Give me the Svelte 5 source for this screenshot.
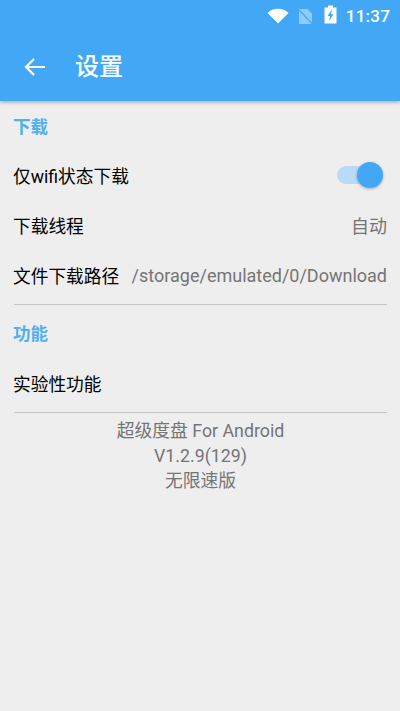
<script>
  const version = 'V1.2.9(129)';
</script>

<div class="screen">
  <header class="appbar">
    <div class="status">
      <svg class="wifi" viewBox="0 0 22 16" width="22" height="16"><path d="M0.5 5 C6.5 -0.6 15.5 -0.6 21.5 5 L11 15.5 Z" fill="#fff"/></svg>
      <svg class="nosim" viewBox="0 0 15 17" width="15" height="17"><path d="M1 1 H9.5 L14 5.5 V16 H1 Z" fill="#fff" fill-opacity=".4"/><path d="M0.5 1.5 L14.5 16" stroke="#42a8f6" stroke-width="1.2"/></svg>
      <svg class="battery" viewBox="0 0 13 19" width="13" height="19"><path d="M4 0.5 H9 V2.5 H12.5 V18.5 H0.5 V2.5 H4 Z" fill="#fff"/><path d="M7.8 4.5 L3.6 11 H6 L5.2 16 L9.4 9.3 H7 Z" fill="#42a8f6"/></svg>
      <span class="time">11:37</span>
    </div>
    <div class="toolbar">
      <svg class="back" viewBox="0 0 24 24" width="24" height="24"><path d="M22 12 H3 M11 4 L3 12 L11 20" fill="none" stroke="#fff" stroke-width="2.2"/></svg>
      <h1>设置</h1>
    </div>
  </header>

  <main class="content">
    <section class="group">
      <h2>下载</h2>
      <div class="row">
        <span class="label">仅wifi状态下载</span>
        <span class="switch"><span class="track"></span><span class="thumb"></span></span>
      </div>
      <div class="row">
        <span class="label">下载线程</span>
        <span class="value">自动</span>
      </div>
      <div class="row">
        <span class="label">文件下载路径</span>
        <span class="value">/storage/emulated/0/Download</span>
      </div>
    </section>
    <section class="group">
      <h2>功能</h2>
      <div class="row">
        <span class="label">实验性功能</span>
      </div>
    </section>
    <footer class="about">
      <p>超级度盘 For Android</p>
      <p>{version}</p>
      <p>无限速版</p>
    </footer>
  </main>
</div>

<style>
  :global(body) {
    margin: 0;
    background: #eeeeee;
  }
  .screen {
    min-height: 711px;
    background: #eeeeee;
    font-family: Roboto, "Noto Sans CJK SC", sans-serif;
    display: flex;
    flex-direction: column;
  }
  .appbar {
    height: 101px;
    background: #42a8f6;
    box-shadow: 0 1px 4px rgba(0, 0, 0, 0.35);
    display: flex;
    flex-direction: column;
  }
  .status {
    height: 32px;
    display: flex;
    align-items: center;
    justify-content: flex-end;
    padding-right: 10px;
    color: #fff;
  }
  .wifi { margin-right: 9px; }
  .nosim { margin-right: 11px; }
  .battery { margin-right: 9px; margin-top: -3px; }
  .time {
    font-size: 17px;
    font-weight: 500;
    letter-spacing: 0.2px;
  }
  .toolbar {
    flex: 1;
    display: flex;
    align-items: center;
    padding-left: 23px;
    color: #fff;
  }
  h1 {
    margin: 0 0 0 28px;
    font-size: 24px;
    font-weight: 500;
    line-height: 32px;
  }
  .content {
    padding: 0 13px 0 14px;
  }
  .group {
    border-bottom: 1px solid #c4c4c4;
    padding-bottom: 4px;
  }
  h2 {
    margin: 0 0 0 -1px;
    height: 49px;
    line-height: 52px;
    font-size: 17.5px;
    font-weight: 700;
    color: #50b0ee;
  }
  .group:not(:first-child) h2 {
    height: 53px;
    line-height: 58px;
  }
  .row {
    height: 50px;
    display: flex;
    align-items: center;
    justify-content: space-between;
    font-size: 17.7px;
    color: #000;
    white-space: nowrap;
  }
  .label {
    margin-left: -1px;
  }
  .value {
    font-size: 18px;
    color: #757575;
  }
  .switch {
    position: relative;
    width: 49px;
    height: 28px;
    display: block;
    margin-right: 1px;
  }
  .track {
    position: absolute;
    left: 0;
    top: 5px;
    width: 40px;
    height: 18px;
    border-radius: 9px;
    background: #b9dbf5;
  }
  .thumb {
    position: absolute;
    right: 3px;
    top: 1px;
    width: 26px;
    height: 26px;
    border-radius: 50%;
    background: #42a8f6;
    box-shadow: 0 1px 3px rgba(0, 0, 0, 0.3);
  }
  .about {
    padding-top: 5px;
    text-align: center;
    font-size: 17.8px;
    line-height: 25px;
    color: #757575;
  }
  .about p {
    margin: 0;
  }
</style>
